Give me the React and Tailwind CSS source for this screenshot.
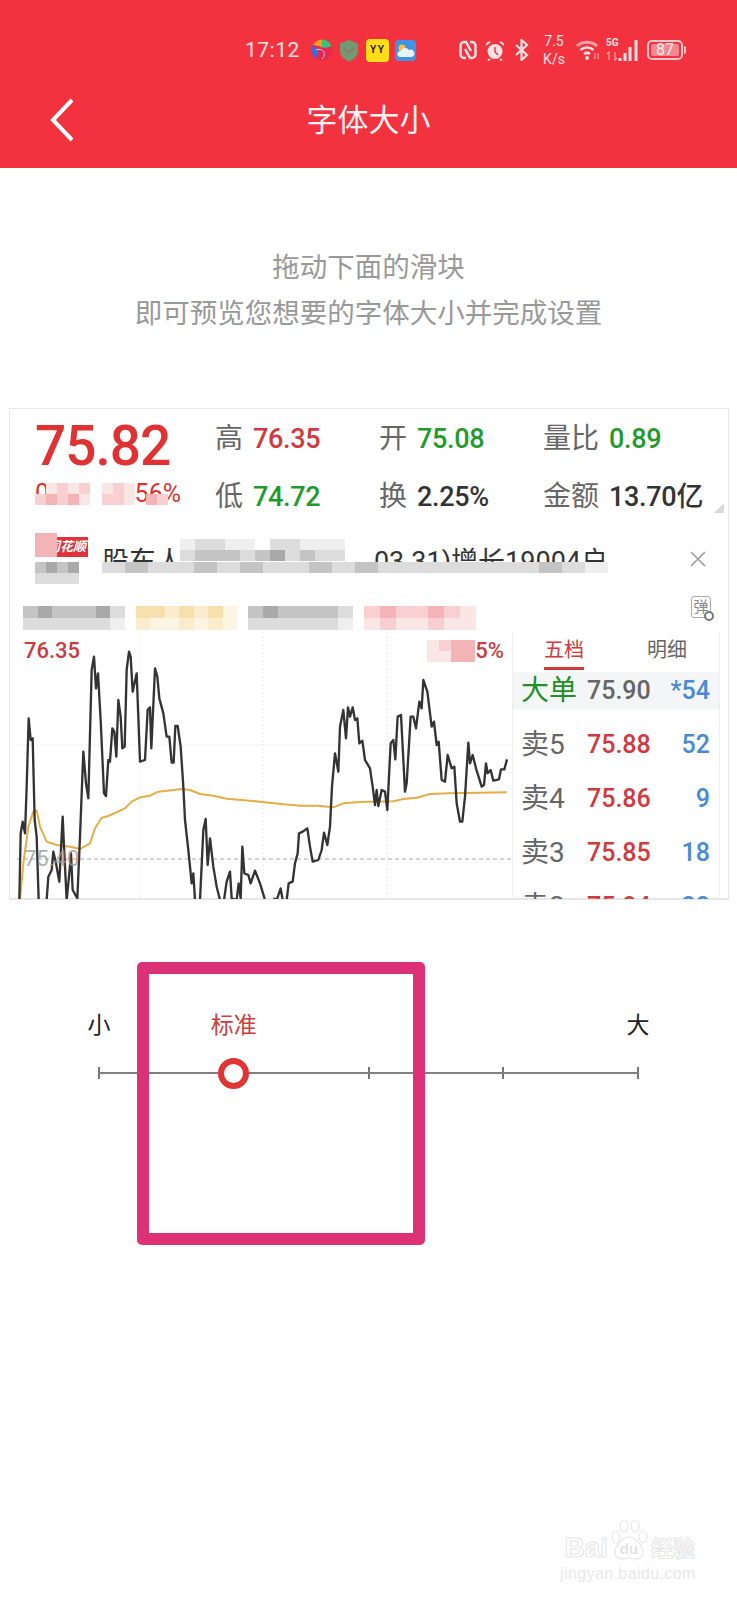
const cjk = "font-['Roboto','Noto_Sans_CJK_SC',sans-serif]"

const blackLine = '58,840 62,640 68,605 75,640 80,500 86,295 92,360 98,355 104,600 110,650 116,840 M140,840 145,770 155,750 160,695 168,730 178,785 188,590 192,680 200,840 208,760 213,700 218,810 232,835 240,650 250,395 258,490 265,535 275,150 282,110 288,205 294,160 302,300 312,520 318,528 325,420 330,425 337,325 343,335 349,410 355,240 362,290 367,385 374,380 380,150 387,95 392,110 398,215 410,160 420,425 435,420 443,270 450,262 454,385 465,145 472,170 478,235 490,280 500,350 508,350 515,428 521,428 526,318 533,318 542,380 550,500 555,600 565,690 575,790 580,760 585,840 M600,840 610,630 617,597 623,735 630,655 640,740 650,800 660,840 M672,840 680,785 690,755 695,835 710,840 716,790 722,835 727,680 733,760 745,765 752,790 765,752 780,790 795,840 M820,835 830,840 842,805 848,840 M860,840 866,790 878,785 885,730 893,700 897,640 908,635 922,625 930,680 938,725 955,720 965,690 972,638 982,675 990,620 996,500 1005,400 1015,455 1020,320 1030,270 1038,355 1044,262 1050,290 1058,262 1065,300 1072,295 1078,370 1087,362 1095,420 1110,445 1118,500 1125,555 1130,510 1135,558 1145,510 1155,515 1162,570 1172,370 1180,360 1186,418 1193,290 1203,285 1215,515 1220,490 1232,290 1240,290 1248,325 1258,245 1265,265 1270,180 1282,215 1295,320 1302,305 1310,375 1316,365 1325,480 1335,485 1343,405 1355,445 1363,440 1370,550 1380,605 1387,605 1395,530 1405,368 1410,430 1418,405 1428,445 1445,500 1452,495 1458,430 1463,460 1472,450 1480,482 1497,478 1503,448 1513,448 1521,418'
const avgLine = '60,840 70,730 85,620 100,575 110,572 120,620 140,665 170,675 210,680 240,687 270,670 285,625 305,593 325,588 375,565 395,545 420,532 450,527 475,515 545,507 570,510 600,522 640,527 680,536 780,545 850,553 900,557 950,557 1000,562 1030,550 1080,546 1180,544 1210,537 1250,533 1290,522 1350,520 1520,517'

const g1 = 'bg-[#a9a9a9]'
const g2 = 'bg-[#c4c4c4]'
const g3 = 'bg-[#dcdcdc]'
const g4 = 'bg-[#efefef]'
const o1 = 'bg-[#f8dfae]'
const o2 = 'bg-[#fbeccd]'
const o3 = 'bg-[#fdf5e4]'
const p1 = 'bg-[#f2b4b6]'
const p2 = 'bg-[#f8d0d1]'
const p3 = 'bg-[#fbe6e6]'
const w = 'bg-white'
const t = 'bg-transparent'

function Mosaic({ rows, cell, className = '' }) {
  return (
    <div className={`flex flex-col ${className}`}>
      {rows.map((row, i) => (
        <div key={i} className="flex">
          {row.map((c, j) => <div key={j} className={`${cell} ${c}`} />)}
        </div>
      ))}
    </div>
  )
}

function StatusBar() {
  return (
    <div className="flex items-center h-[40px] pl-[245px] text-white/85">
      <span className="w-[58px] text-[21px] leading-none tracking-[0.5px] font-['Roboto',sans-serif]">17:12</span>
      <svg className="ml-[8px]" width="22" height="22" viewBox="0 0 22 22">
        <circle cx="11" cy="11" r="10.500" fill="#e9264f" />
        <path d="M11 .5A10.500 10.500 0 0 0 2 6c4 .5 7 1 9 2.500z" fill="#f59a23" />
        <path d="M11 .5A10.500 10.500 0 0 1 20.500 7c-3 1.500-6 2-9.500 1.500z" fill="#35c27a" />
        <path d="M2 6A10.500 10.500 0 0 0 5 19.500c2-3 3-6 1-9.500z" fill="#2f6fe0" />
        <path d="M5 11c4-1.500 7 0 8 2 1 2 0 5-2 7" fill="none" stroke="#f6e6ea" strokeWidth="0.800" />
      </svg>
      <svg className="ml-[6px]" width="20" height="23" viewBox="0 0 20 23">
        <path d="M10 1l9 3.500v7c0 5-4 9-9 11-5-2-9-6-9-11v-7z" fill="#6f9a72" />
        <path d="M5.500 10l4.500 4 4.500-5" fill="none" stroke="#a3715f" strokeWidth="1.800" />
      </svg>
      <div className="ml-[7px] w-[23px] h-[23px] rounded-[4px] bg-[#ffdd17] flex items-center justify-center text-[10px] leading-none font-bold tracking-[1px] text-[#222] font-['Liberation_Sans',sans-serif]">YY</div>
      <svg className="ml-[6px]" width="21" height="21" viewBox="0 0 21 21">
        <rect width="21" height="21" rx="4" fill="#3f93e6" />
        <circle cx="7" cy="8" r="3.500" fill="#f6c445" />
        <path d="M5 17a3 3 0 0 1 1-6 4.500 4.500 0 0 1 8-1 3.500 3.500 0 0 1 3 7z" fill="#e8f4fb" />
      </svg>
      <svg className="ml-[43px]" width="18" height="20" viewBox="0 0 18 20">
        <path d="M7 18H5a3.500 3.500 0 0 1-3.500-3.500v-9A3.500 3.500 0 0 1 5 2h2l5 9" fill="none" stroke="#fbe2e4" strokeWidth="2.500" />
        <path d="M11 2h2a3.500 3.500 0 0 1 3.500 3.500v9A3.500 3.500 0 0 1 13 18h-2L6 9" fill="none" stroke="#fbe2e4" strokeWidth="2.500" />
      </svg>
      <svg className="ml-[8px]" width="20" height="21" viewBox="0 0 20 21">
        <circle cx="10" cy="11.500" r="7.500" fill="#fbe2e4" />
        <path d="M10 7v5l3 3" fill="none" stroke="#f2333f" strokeWidth="1.500" />
        <path d="M1 6a3.500 3.500 0 0 1 5-4zM19 6a3.500 3.500 0 0 0-5-4z" fill="#fbe2e4" />
        <path d="M5 19l-2 1.500M15 19l2 1.500" fill="none" stroke="#fbe2e4" strokeWidth="2" />
      </svg>
      <svg className="ml-[9px]" width="15" height="22" viewBox="0 0 15 22">
        <path d="M2 6l11 10-5.500 5V1L13 6 2 16" fill="none" stroke="#fbe2e4" strokeWidth="2.200" />
      </svg>
      <div className="ml-[13px] w-[24px] flex flex-col items-center text-[14px] leading-[18px] font-['Roboto',sans-serif]">
        <span>7.5</span>
        <span>K/s</span>
      </div>
      <svg className="ml-[10px]" width="24" height="20" viewBox="0 0 24 20">
        <path d="M1 6a15 15 0 0 1 20 0" fill="none" stroke="#f8a3a8" strokeWidth="3" />
        <path d="M4.500 10a10 10 0 0 1 13 0" fill="none" stroke="#fbe2e4" strokeWidth="2.500" />
        <path d="M8 14a5 5 0 0 1 6 0" fill="none" stroke="#fbe2e4" strokeWidth="2.500" />
        <circle cx="11" cy="18" r="2" fill="#fbe2e4" />
        <path d="M19 13v6M22 13v6" stroke="#f8a3a8" strokeWidth="1.200" />
      </svg>
      <div className="ml-[6px] w-[33px] h-[24px] relative">
        <span className="absolute left-0 top-[-1px] text-[10px] font-bold leading-[12px] font-['Roboto',sans-serif]">5G</span>
        <svg className="absolute left-0 top-[13px]" width="12" height="10" viewBox="0 0 12 10">
          <path d="M3 9V1L1 3M9 1v8l2-2" fill="none" stroke="#f8a3a8" strokeWidth="1.200" />
        </svg>
        <svg className="absolute right-0 top-0" width="21" height="24" viewBox="0 0 21 24">
          <path d="M2 20v3M7 15v8M12 9v14M18 2v21" stroke="#fbe2e4" strokeWidth="3" />
        </svg>
      </div>
      <div className="ml-[8px] flex items-center">
        <div className="w-[36px] h-[20px] rounded-[5px] border-2 border-[#f9c6c9] p-[2px] flex">
          <div className="flex-1 bg-[#f6878e] rounded-[2px] flex items-center justify-center text-[16px] leading-none text-white/90 font-['Roboto',sans-serif]">87</div>
        </div>
        <div className="ml-[1px] w-[2px] h-[8px] bg-[#f9c6c9] rounded-r-sm" />
      </div>
    </div>
  )
}

function QuoteRow({ children }) {
  return <div className="flex items-center h-[58px]">{children}</div>
}

function Stat({ label, value, color, width = 'w-[164px]' }) {
  return (
    <div className={`${width} flex items-center gap-[10px]`}>
      <span className="text-[28px] leading-none text-[#666]">{label}</span>
      <span className={`text-[27px] leading-none font-medium tracking-[-0.3px] ${color}`}>{value}</span>
    </div>
  )
}

function Quote() {
  return (
    <div className="relative h-[116px] pt-[1px]">
      <div className="flex">
        <div className="w-[205px] pl-[25px] pt-[5px]">
          <div className="text-[55px] leading-[62px] font-medium text-[#e03232] tracking-[-1px]">75.82</div>
          <div className="relative h-[26px] mt-[6px]">
            <span className="absolute left-0 top-[-2px] text-[25px] leading-[26px] text-[#e03232]">0</span>
            <span className="absolute right-[34px] top-[-2px] text-[25px] leading-[26px] text-[#e03232]">56%</span>
            <div className="absolute inset-0 flex gap-[12px]">
              <Mosaic cell="w-[11px] h-[11px]" rows={[[t, p3, p2, p3, p2], [p2, p1, p2, p1, p3]]} />
              <Mosaic cell="w-[11px] h-[11px]" rows={[[p3, p2, p3, t, t, t, t], [p2, p2, p3, t, p1, p2, t]]} />
            </div>
          </div>
        </div>
        <div className="flex-1">
          <QuoteRow>
            <Stat label="高" value="76.35" color="text-[#d2383e]" />
            <Stat label="开" value="75.08" color="text-[#1f9a2c]" />
            <Stat label="量比" value="0.89" color="text-[#1f9a2c]" width="w-[170px]" />
          </QuoteRow>
          <QuoteRow>
            <Stat label="低" value="74.72" color="text-[#1f9a2c]" />
            <Stat label="换" value="2.25%" color="text-[#333]" />
            <Stat label="金额" value="13.70亿" color="text-[#333]" width="w-[170px]" />
          </QuoteRow>
        </div>
      </div>
      <div className="absolute right-[4px] bottom-[12px] w-0 h-0 border-l-[10px] border-l-transparent border-b-[10px] border-b-[#d9d9d9]" />
    </div>
  )
}

function Notice() {
  return (
    <div className="relative h-[67px] bg-white">
      <div className="absolute left-[25px] top-[12px] w-[53px] h-[20px] bg-[#e0323a] text-white text-[13px] leading-[20px] text-right pr-[2px] italic font-bold">同花顺</div>
      <Mosaic className="absolute left-[25px] top-[8px]" cell="w-[22px] h-[24px]" rows={[[p1]]} />
      <div className="absolute left-[92px] top-[18px] w-[506px] flex justify-between text-[27px] leading-[38px] text-[#333]">
        <span>股东人</span>
        <span>03.31)增长19004户</span>
      </div>
      {/* blurred strip sits over the lower half of the text */}
      <div className="absolute left-0 right-0 top-[37px] h-[30px] bg-white" />
      <Mosaic
        className="absolute left-[25px] top-[37px]"
        cell="w-[11px] h-[11px]"
        rows={[[g2, g1, g2, g1], [g3, g3, g3, g3]]}
      />
      <Mosaic
        className="absolute left-[170px] top-[14px]"
        cell="w-[15px] h-[11px]"
        rows={[
          [g4, g3, g3, g4, g4, w, g3, g3, g4, g4, g4],
          [g3, g2, g2, g2, g3, g2, g1, g3, g2, g3, g3],
        ]}
      />
      <Mosaic
        className="absolute left-[92px] top-[37px]"
        cell="w-[23px] h-[11px]"
        rows={[[g3, g2, g3, g3, g2, g3, g2, g3, g3, g2, g3, g2, g3, g3, g3, g3, g3, g3, g3, g2, g3, g4]]}
      />
      <svg className="absolute right-[21px] top-[25px]" width="18" height="18" viewBox="0 0 18 18">
        <path d="M2 2l14 14M16 2L2 16" stroke="#999" strokeWidth="1.500" />
      </svg>
    </div>
  )
}

function BlurTabs() {
  return (
    <div className="relative h-[40px] pt-[14px] flex gap-[11px] pl-[13px] bg-white overflow-hidden">
      <Mosaic cell="w-[14.500px] h-[12px]" rows={[[g2, g1, g2, g2, g2, g1, g3], [g3, g3, g3, g3, g3, g3, g4]]} />
      <Mosaic cell="w-[14.500px] h-[12px]" rows={[[o1, o1, o2, o1, o2, o1, o3], [o2, o3, o3, o2, o3, o2, o3]]} />
      <Mosaic cell="w-[15px] h-[12px]" rows={[[g2, g1, g2, g2, g2, g2, g3], [g3, g3, g3, g3, g3, g3, g4]]} />
      <Mosaic cell="w-[16px] h-[12px]" rows={[[p2, p1, p2, p2, p1, p2, p3], [p3, p2, p3, p3, p2, p3, p3]]} />
      <div className="absolute right-[17px] top-[4px] w-[20px] h-[22px] border border-[#aaa] rounded-[3px] text-[#888] text-[15px] leading-[20px] text-center">
        弹
        <div className="absolute right-[-4px] bottom-[-4px] w-[10px] h-[10px] rounded-full border-2 border-[#777] bg-white" />
      </div>
    </div>
  )
}

function Chart() {
  return (
    <div className="relative w-[495px] h-[267px] overflow-hidden">
      <svg width="495" height="267" viewBox="51 36 1485 801">
        <path d="M420 36V837M790 36V837M1162 36V837M51 375H1536" stroke="#e2e2e2" strokeWidth="2" strokeDasharray="6 6" fill="none" />
        <path d="M51 717H1536" stroke="#a5a5a5" strokeWidth="3" strokeDasharray="12 9" fill="none" />
        <path d={`M${avgLine}`} stroke="#e6ad45" strokeWidth="6" fill="none" strokeLinejoin="round" />
        <path d={`M${blackLine}`} stroke="#333" strokeWidth="7" fill="none" strokeLinejoin="round" />
      </svg>
      <span className="absolute left-[7px] top-[6px] text-[22px] leading-[26px] font-medium text-[#cb3a40]">76.35</span>
      <span className="absolute left-[7px] top-[214px] text-[22px] leading-[26px] text-[#999]/80">75.40</span>
      <span className="absolute right-[8px] top-[6px] text-[22px] leading-[26px] font-medium text-[#cb3a40]">5%</span>
      <Mosaic
        className="absolute left-[410px] top-[8px]"
        cell="w-[12px] h-[11px]"
        rows={[[p3, p2, p1, p1], [p3, p3, p1, p1]]}
      />
    </div>
  )
}

function DepthRow({ label, price, qty, labelColor = 'text-[#666]', priceColor = 'text-[#d2383e]', active }) {
  return (
    <div className={`flex items-center h-[37px] mb-[17px] pl-[8px] pr-[9px] ${active ? 'bg-[#f4f5f6]' : ''}`}>
      <span className={`w-[66px] text-[28px] leading-none ${labelColor}`}>{label}</span>
      <span className={`text-[25px] leading-none font-medium ${priceColor}`}>{price}</span>
      <span className="flex-1 text-right text-[25px] leading-none font-medium text-[#4a8ad4]">{qty}</span>
    </div>
  )
}

function Depth() {
  return (
    <div className="w-[208px] border-l border-r border-[#eee] h-[267px] overflow-hidden">
      <div className="flex h-[40px]">
        <div className="w-[102px] flex justify-center">
          <span className="h-[38px] w-[40px] text-center text-[20px] leading-[36px] text-[#d2383e] border-b-[3px] border-[#d2383e] whitespace-nowrap">五档</span>
        </div>
        <div className="flex-1 flex justify-center">
          <span className="text-[20px] leading-[36px] text-[#666]">明细</span>
        </div>
      </div>
      <DepthRow label="大单" price="75.90" qty="*54" labelColor="text-[#1f8f26]" priceColor="text-[#666]" active />
      <DepthRow label="卖5" price="75.88" qty="52" />
      <DepthRow label="卖4" price="75.86" qty="9" />
      <DepthRow label="卖3" price="75.85" qty="18" />
      <DepthRow label="卖2" price="75.84" qty="32" />
    </div>
  )
}

function Tick({ label, active }) {
  return (
    <div className="w-0 flex flex-col items-center">
      <div className={`h-[34px] flex items-center whitespace-nowrap text-[23px] ${active ? 'text-[#cc3d3f]' : 'text-[#222]'}`}>{label}</div>
      <div className="mt-[22px] h-[16px] flex items-center justify-center">
        {active
          ? <div className="relative z-10 w-[31px] h-[31px] shrink-0 rounded-full bg-white border-[6px] border-[#e13434]" />
          : <div className="w-[2px] h-[12px] shrink-0 bg-[#777]" />}
      </div>
    </div>
  )
}

function Slider() {
  return (
    <div className="relative ml-[99px] mt-[109px] w-[539px] flex justify-between">
      <div className="absolute left-0 right-0 top-[63px] h-[2px] bg-[#808080]" />
      <Tick label="小" />
      <Tick label="标准" active />
      <Tick />
      <Tick />
      <Tick label="大" />
    </div>
  )
}

export default function App() {
  return (
    <div className={`relative w-[737px] h-[1600px] bg-white overflow-hidden ${cjk}`}>
      <header className="h-[168px] pt-[30px] bg-[#f2333f]">
        <StatusBar />
        <div className="relative flex items-center justify-center h-[80px] mt-[10px]">
          <svg className="absolute left-[49px] top-[18px]" width="26" height="44" viewBox="0 0 26 44">
            <path d="M23 2L4 22l19 20" fill="none" stroke="#fff" strokeWidth="4" />
          </svg>
          <h1 className="text-[31px] leading-none text-white/95">字体大小</h1>
        </div>
      </header>

      <div className="pt-[77px] text-center text-[27.500px] leading-[46px] text-[#999]">
        <p>拖动下面的滑块</p>
        <p>即可预览您想要的字体大小并完成设置</p>
      </div>

      <section className="mt-[71px] ml-[9px] w-[720px] h-[492px] border border-[#e8e8e8] overflow-hidden">
        <Quote />
        <Notice />
        <BlurTabs />
        <div className="flex h-[267px] pl-[7px] border-b border-[#e6e6e6]">
          <Chart />
          <Depth />
        </div>
      </section>

      <Slider />

      <div className="absolute left-[137px] top-[962px] w-[288px] h-[283px] border-[12px] border-[#dc3275] rounded-[5px]" />

      {/* watermark */}
      <div className="absolute left-[560px] top-[1518px] w-[140px] text-[#e9e9e9]">
        <div className="flex items-end h-[44px]">
          <span className="w-[48px] text-[28px] leading-[28px] font-bold text-transparent [-webkit-text-stroke:1px_#e6e6e6] font-['Liberation_Sans',sans-serif] text-right">Bai</span>
          <div className="relative ml-[1px] w-[40px] h-[44px]">
            <svg width="40" height="44" viewBox="0 0 40 44">
              <g fill="none" stroke="#e8e8e8" strokeWidth="1.200">
                <ellipse cx="7" cy="19" rx="4" ry="6" />
                <ellipse cx="15" cy="8" rx="4" ry="6" />
                <ellipse cx="26" cy="8" rx="4" ry="6" />
                <ellipse cx="34" cy="19" rx="4" ry="6" />
                <path d="M20 19c6 0 14 9 14 15 0 7-7 8-14 6-7 2-14 1-14-6 0-6 8-15 14-15z" />
              </g>
            </svg>
            <span className="absolute left-0 right-0 top-[23px] text-center text-[15px] leading-[16px] font-bold text-[#e4e4e4] font-['Liberation_Sans',sans-serif]">du</span>
          </div>
          <span className="ml-[2px] text-[22px] leading-[26px] font-bold text-transparent [-webkit-text-stroke:1px_#e6e6e6]">经验</span>
        </div>
        <div className="mt-[2px] text-[16px] leading-[20px] whitespace-nowrap font-['Liberation_Sans',sans-serif] tracking-[0.4px]">jingyan.baidu.com</div>
      </div>
    </div>
  )
}
